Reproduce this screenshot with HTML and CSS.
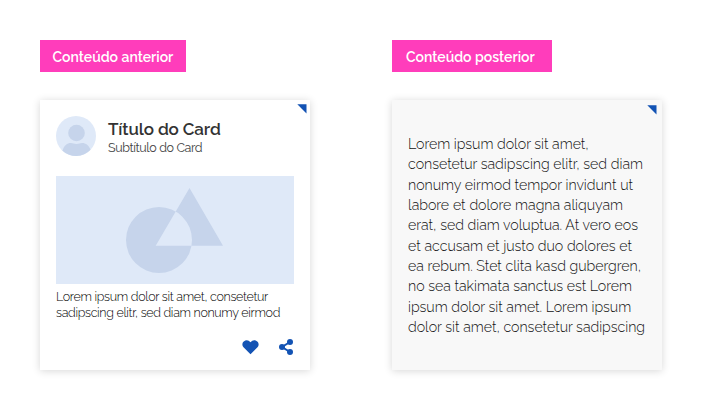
FILE: index.html
```html
<!DOCTYPE html>
<html lang="pt-BR">
<head>
<meta charset="utf-8">
<title>Card</title>
<link rel="stylesheet" href="styles.css">
</head>
<body>
<main class="columns">
  <section class="column">
    <h2 class="label label-front"><span>Conteúdo anterior</span></h2>
    <article class="card">
      <svg class="corner" width="10" height="10" viewBox="0 0 10 10"><path d="M.3.3H9.5V9.5Z"/></svg>
      <header class="header">
        <svg class="avatar" width="40" height="40" viewBox="0 0 40 40">
          <circle cx="20" cy="20" r="20" fill="#dfe9f8"/>
          <circle cx="20.5" cy="17" r="8.3" fill="#c6d4eb"/>
          <path d="M6.5 34.7C8 29.5 11 27 15 27c2 0 3 1 5.500 1S24 27 26 27c4 0 7 2.500 8.500 6.800A20 20 0 0 1 6.500 34.700Z" fill="#c6d4eb"/>
        </svg>
        <div class="heading">
          <h1 class="title"><span>Título do Card</span></h1>
          <p class="subtitle"><span>Subtítulo do Card</span></p>
        </div>
      </header>
      <svg class="media" width="238" height="108" viewBox="0 0 238 108">
        <path fill="#c6d4eb" fill-rule="evenodd" d="M70 64a33 33 0 1 0 66 0a33 33 0 1 0-66 0ZM133.500 12L167 69.700H99.700Z"/>
      </svg>
      <p class="summary">
        <span class="line s1">Lorem ipsum dolor sit amet, consetetur</span>
        <span class="line s2">sadipscing elitr, sed diam nonumy eirmod</span>
      </p>
      <footer class="actions">
        <svg width="17" height="16" viewBox="0 0 18 16"><path d="M9 15.700L1.600 8.300C-.2 6.400.1 3.500 1.900 2.100C4.200.3 7 .5 9 3.100C11 .5 13.800.3 16.100 2.100C17.900 3.500 18.200 6.400 16.400 8.300Z"/></svg>
        <svg width="16" height="16" viewBox="0 0 16 16"><path d="M12 3L4 8l8 5" fill="none" stroke="#1353b4" stroke-width="2"/><circle cx="12" cy="3" r="3"/><circle cx="4" cy="8" r="3"/><circle cx="12" cy="13" r="3"/></svg>
      </footer>
    </article>
  </section>
  <section class="column">
    <h2 class="label label-back"><span>Conteúdo posterior</span></h2>
    <article class="card card-back">
      <svg class="corner" width="10" height="10" viewBox="0 0 10 10"><path d="M.3.3H9.500V9.500Z"/></svg>
      <p class="body">
        <span class="line b1">Lorem ipsum dolor sit amet,</span>
        <span class="line b2">consetetur sadipscing elitr, sed diam</span>
        <span class="line b3">nonumy eirmod tempor invidunt ut</span>
        <span class="line b4">labore et dolore magna aliquyam</span>
        <span class="line b5">erat, sed diam voluptua. At vero eos</span>
        <span class="line b6">et accusam et justo duo dolores et</span>
        <span class="line b7">ea rebum. Stet clita kasd gubergren,</span>
        <span class="line b8">no sea takimata sanctus est Lorem</span>
        <span class="line b9">ipsum dolor sit amet. Lorem ipsum</span>
        <span class="line b10">dolor sit amet, consetetur sadipscing</span>
      </p>
    </article>
  </section>
</main>
</body>
</html>
```
FILE: styles.css
```css
* { box-sizing: border-box; }
body { margin: 0; background: #fff; color: #333; font-family: Raleway, Lato, sans-serif; }
h1, h2, p { margin: 0; }
svg { display: block; flex: none; fill: #1353b4; }
.columns { display: flex; gap: 82px; padding: 40px; }
.column { width: 270px; flex: none; }
.label { height: 32px; margin-bottom: 28px; background: #ff3dbb; color: #fff; font-size: 14px; line-height: 34px; font-weight: 600; white-space: nowrap; }
.label-front { width: 146px; padding-left: 12.5px; }
.label-back { width: 160px; padding-left: 14px; }
.card { position: relative; height: 270px; padding: 16px; background: #fff; box-shadow: 0 1px 8px rgba(0, 0, 0, .16); }
.card-back { padding-top: 34px; background: #f8f8f8; }
.corner { position: absolute; top: 4px; right: 3px; }
.card-back .corner { top: 5px; right: 5px; }
.header { display: flex; gap: 12px; height: 60px; }
.heading { padding-top: 3px; white-space: nowrap; }
.title { font-size: 17px; line-height: 21px; font-weight: 600; letter-spacing: -.1px; }
.subtitle { font-size: 12.5px; line-height: 15px; color: #444; letter-spacing: -.4px; }
.media { background: #dfe9f8; }
.line { display: block; white-space: nowrap; text-align-last: justify; }
.summary { margin-top: 5px; font-size: 12.5px; line-height: 16px; font-weight: 300; color: #000; letter-spacing: -.33px; }
.s1 { width: 212px; }
.s2 { width: 224px; }
.actions { display: flex; justify-content: flex-end; gap: 19px; margin-top: 18px; }
.body { font-size: 14.2px; line-height: 20.33px; font-weight: 300; color: #111; letter-spacing: -.02px; }
.b1 { width: 180px; }
.b2 { width: 235px; }
.b3 { width: 225px; }
.b4 { width: 215px; }
.b5 { width: 230px; }
.b6 { width: 224px; }
.b7 { width: 233px; }
.b8 { width: 224px; }
.b9 { width: 223px; }
.b10 { width: 237px; }
```
